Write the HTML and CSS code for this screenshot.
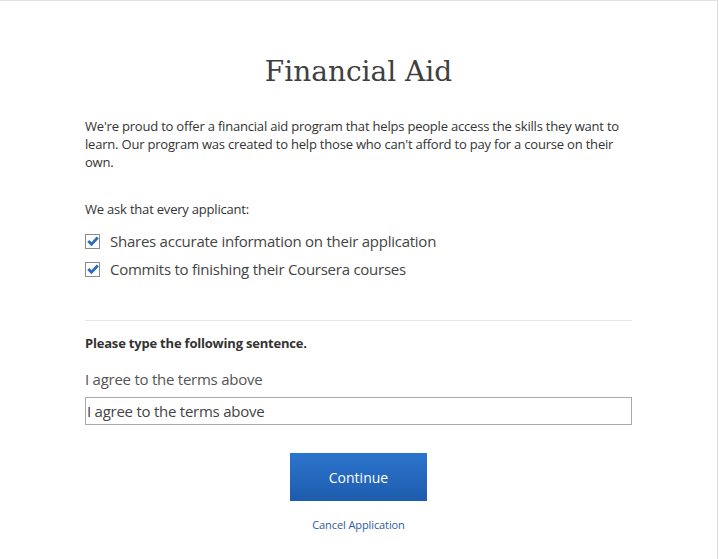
FILE: index.html
```html
<!DOCTYPE html>
<html lang="en">
<head>
  <meta charset="UTF-8">
  <meta name="viewport" content="width=device-width, initial-scale=1.0">
  <title>Financial Aid</title>
  <link rel="stylesheet" href="styles.css">
</head>
<body>
  <div class="modal">
    <div class="content">
      <h1>Financial Aid</h1>
      <p class="intro">We're proud to offer a financial aid program that helps people access the skills they want to learn. Our program was created to help those who can't afford to pay for a course on their own.</p>

      <p class="ask">We ask that every applicant:</p>
      <ul class="checks">
        <li>
          <span class="box"><svg width="12" height="10" viewBox="0 0 12 10"><path d="M1.3 5 L4.5 8.2 L10.8 1.5" fill="none" stroke="#2c6bbf" stroke-width="2.8"/></svg></span>
          Shares accurate information on their application
        </li>
        <li>
          <span class="box"><svg width="12" height="10" viewBox="0 0 12 10"><path d="M1.3 5 L4.5 8.2 L10.8 1.5" fill="none" stroke="#2c6bbf" stroke-width="2.8"/></svg></span>
          Commits to finishing their Coursera courses
        </li>
      </ul>

      <hr>

      <p class="label">Please type the following sentence.</p>
      <p class="sentence">I agree to the terms above</p>
      <input type="text" class="field" value="I agree to the terms above">

      <div class="actions">
        <button class="continue">Continue</button>
        <a href="#" class="cancel">Cancel Application</a>
      </div>
    </div>
  </div>
</body>
</html>
```

FILE: styles.css
```css
body {
  margin: 0;
  background: #fff;
  font-family: 'Open Sans', 'Liberation Sans', sans-serif;
  color: #333;
}
.modal {
  width: 717px;
  height: 558px;
  border-top: 1px solid #e2e2e2;
  border-right: 1px solid #dcdcdc;
}
.content {
  width: 547px;
  padding: 54px 0 0 85px;
}
h1 {
  margin: 0 0 29px;
  text-align: center;
  font-family: 'DejaVu Serif', 'Liberation Serif', serif;
  font-weight: normal;
  font-size: 28px;
  color: #404040;
}
.intro {
  margin: 0 0 29px;
  font-size: 13px;
  line-height: 18px;
  letter-spacing: -0.2px;
}
.ask {
  margin: 0 0 9px;
  font-size: 13px;
  line-height: 18px;
  letter-spacing: -0.2px;
}
.checks {
  list-style: none;
  margin: 0;
  padding: 0;
}
.checks li {
  display: flex;
  align-items: center;
  gap: 10px;
  height: 28px;
  font-size: 15px;
  letter-spacing: -0.25px;
  color: #444;
}
.box {
  width: 15px;
  height: 15px;
  border: 1px solid #8a8a8a;
  box-sizing: border-box;
  display: flex;
  align-items: center;
  justify-content: center;
  background: #fff;
}
hr {
  border: none;
  border-top: 1px solid #e6e6e6;
  margin: 37px 0 13px;
}
.label {
  margin: 0 0 17px;
  font-size: 13px;
  font-weight: bold;
  line-height: 18px;
  letter-spacing: -0.2px;
}
.sentence {
  margin: 0 0 8px;
  font-size: 15px;
  line-height: 20px;
  letter-spacing: -0.25px;
  color: #555;
}
.field {
  display: block;
  width: 547px;
  height: 28px;
  box-sizing: border-box;
  border: 1px solid #a9a9a9;
  padding: 0 1px;
  font-family: 'Open Sans', 'Liberation Sans', sans-serif;
  font-size: 15px;
  letter-spacing: -0.25px;
  color: #444;
  outline: none;
}
.actions {
  display: flex;
  flex-direction: column;
  align-items: center;
  margin-top: 28px;
}
.continue {
  width: 137px;
  height: 48px;
  border: none;
  background: linear-gradient(#2b74cd, #1e5cad);
  color: #fff;
  font-family: 'Open Sans', 'Liberation Sans', sans-serif;
  font-size: 14px;
  cursor: pointer;
}
.cancel {
  margin-top: 16px;
  font-size: 11px;
  letter-spacing: -0.1px;
  color: #2a5c9e;
  text-decoration: none;
}
```
